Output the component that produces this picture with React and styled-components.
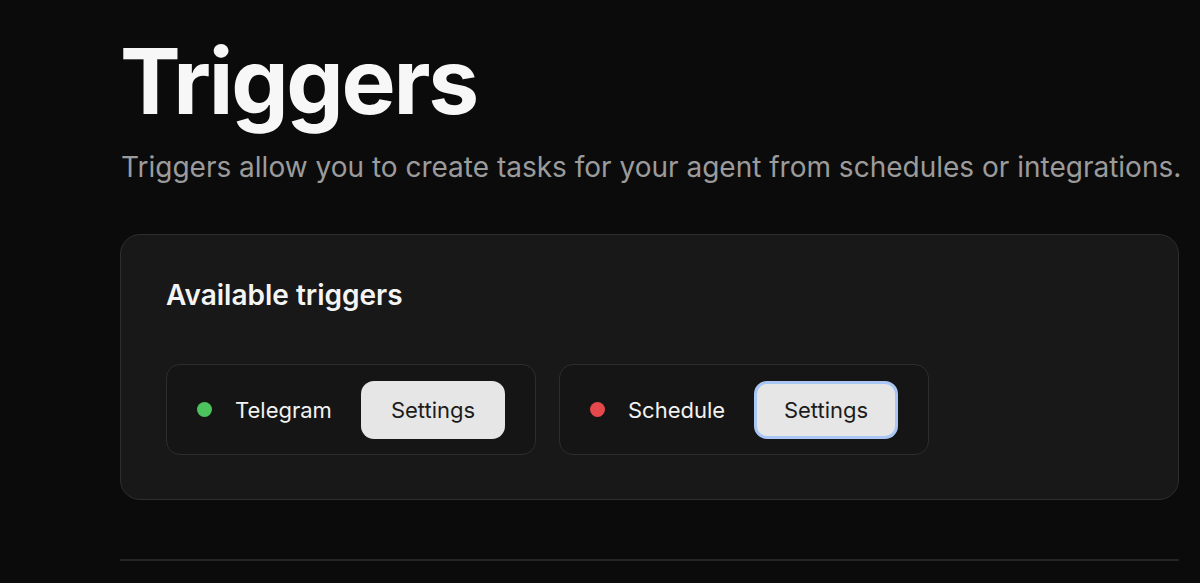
import React from "react";
import styled, { createGlobalStyle } from "styled-components";

const GlobalStyle = createGlobalStyle`
  html, body {
    margin: 0;
    padding: 0;
    background: #0b0b0b;
  }
  body {
    font-family: Inter, "Noto Sans", "Liberation Sans", sans-serif;
    -webkit-font-smoothing: antialiased;
  }
`;

const Page = styled.div`
  min-height: 583px;
  padding: 31px 21px 0 120px;
  box-sizing: border-box;
`;

const Title = styled.h1`
  margin: 0;
  font-size: 91px;
  line-height: 100px;
  font-weight: 700;
  letter-spacing: -0.025em;
  color: #f7f7f7;
`;

const Subtitle = styled.p`
  margin: 17px 0 0 1px;
  font-size: 28px;
  line-height: 39px;
  font-weight: 400;
  color: #9b9b9b;
  white-space: nowrap;
`;

const Card = styled.section`
  margin-top: 47px;
  padding: 45px 45px 44px;
  background: #181818;
  border: 1px solid #2e2e2e;
  border-radius: 20px;
`;

const CardTitle = styled.h2`
  margin: 0;
  font-size: 28px;
  line-height: 31px;
  font-weight: 600;
  color: #f4f4f4;
`;

const TriggerList = styled.div`
  display: flex;
  gap: 23px;
  margin-top: 53px;
`;

const TriggerItem = styled.div`
  display: flex;
  align-items: center;
  width: 370px;
  height: 91px;
  box-sizing: border-box;
  padding: 0 30px;
  background: #151515;
  border: 1px solid #2d2d2d;
  border-radius: 14px;
`;

const Dot = styled.span`
  width: 15px;
  height: 15px;
  border-radius: 50%;
  background: ${(p) => p.$color};
  flex-shrink: 0;
`;

const TriggerName = styled.span`
  margin-left: 23px;
  font-size: 22px;
  font-weight: 400;
  color: #f2f2f2;
`;

const SettingsButton = styled.button`
  margin-left: auto;
  width: 144px;
  height: 58px;
  box-sizing: border-box;
  font-family: inherit;
  font-size: 22px;
  font-weight: 400;
  color: #1c1c1c;
  background: #e6e6e6;
  border: 3px solid ${(p) => (p.$focused ? "#a9c6f4" : "transparent")};
  border-radius: 13px;
  cursor: pointer;
`;

const Divider = styled.hr`
  margin: 59px 0 0;
  height: 2px;
  border: none;
  background: #242424;
`;

const triggers = [
  { name: "Telegram", color: "#4cc35c", focused: false },
  { name: "Schedule", color: "#e5484d", focused: true },
];

export default function App() {
  return (
    <>
      <GlobalStyle />
      <Page>
        <Title>Triggers</Title>
        <Subtitle>
          Triggers allow you to create tasks for your agent from schedules or
          integrations.
        </Subtitle>
        <Card>
          <CardTitle>Available triggers</CardTitle>
          <TriggerList>
            {triggers.map((t) => (
              <TriggerItem key={t.name}>
                <Dot $color={t.color} />
                <TriggerName>{t.name}</TriggerName>
                <SettingsButton $focused={t.focused}>Settings</SettingsButton>
              </TriggerItem>
            ))}
          </TriggerList>
        </Card>
        <Divider />
      </Page>
    </>
  );
}
